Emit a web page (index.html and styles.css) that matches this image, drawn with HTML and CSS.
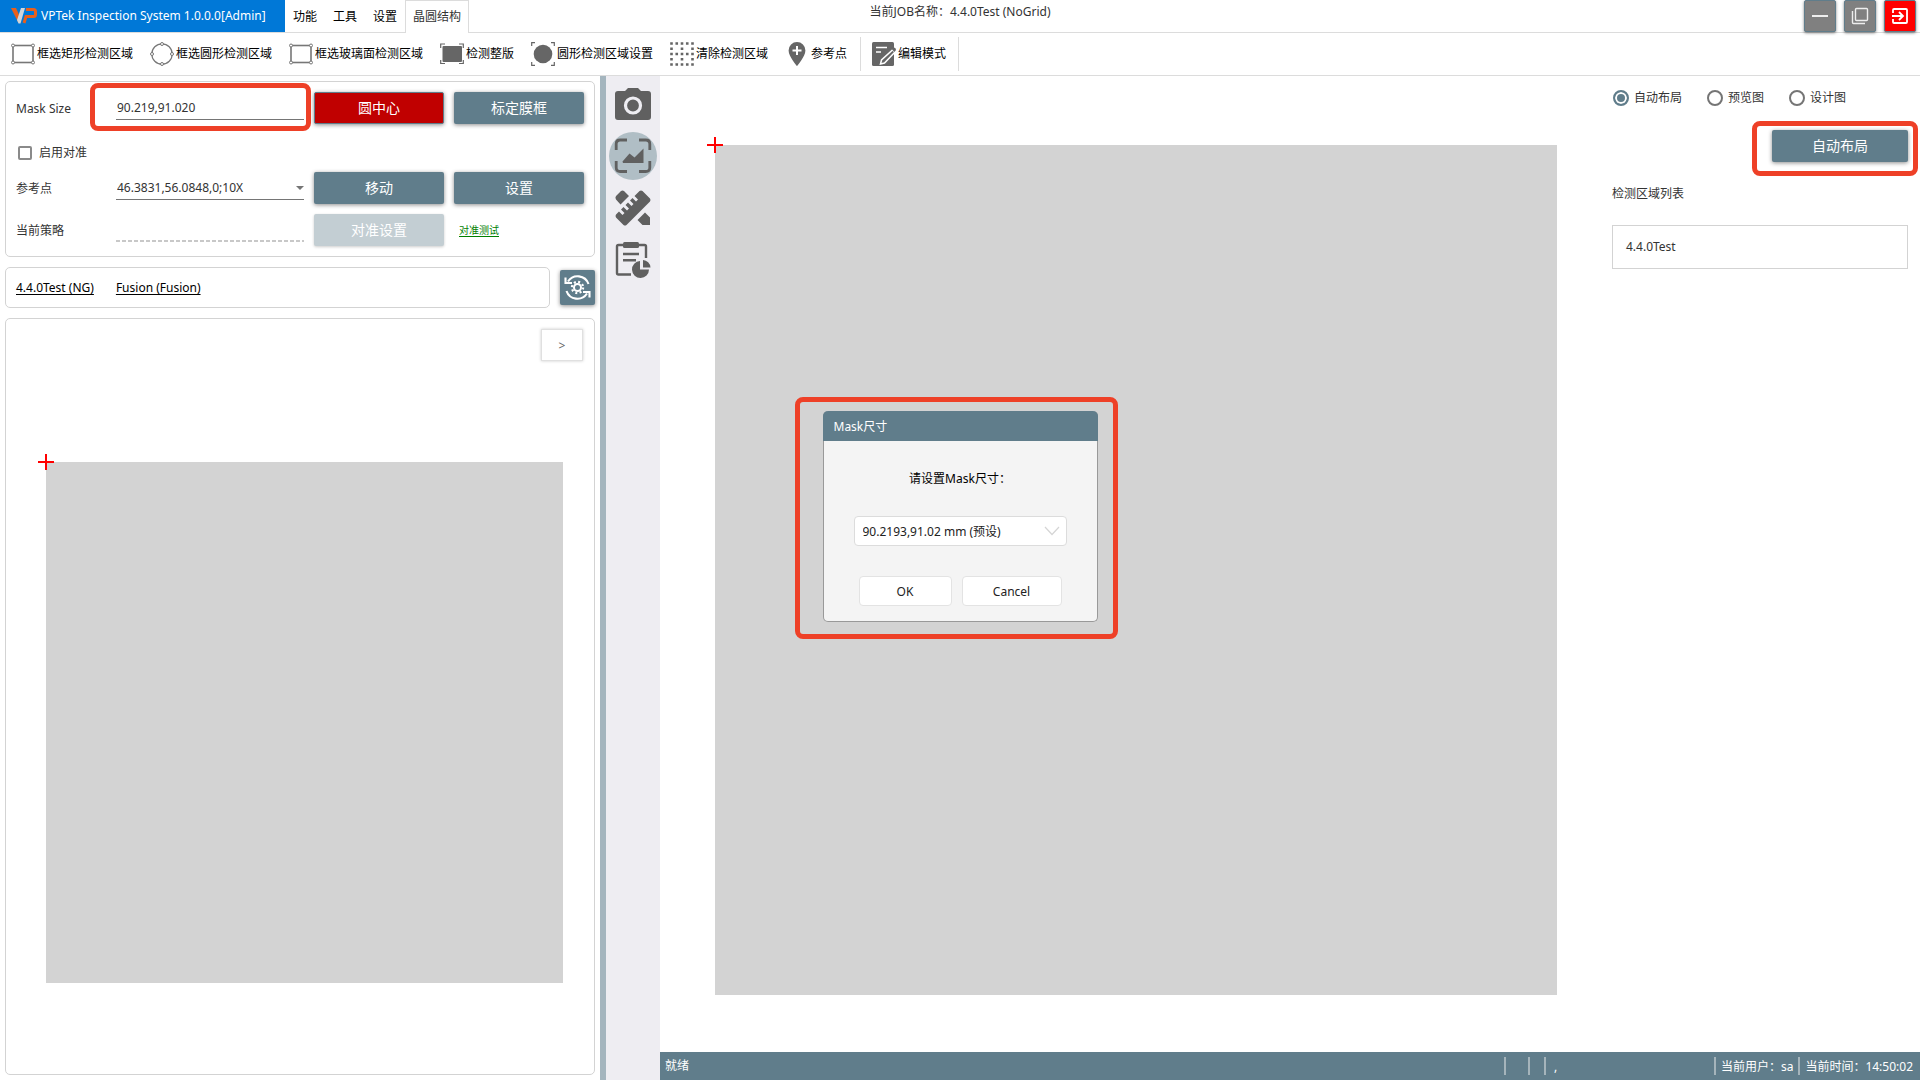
FILE: index.html
```html
<!DOCTYPE html>
<html lang="zh-CN">
<head>
<meta charset="utf-8">
<title>VPTek Inspection System</title>
<link rel="stylesheet" href="styles.css">
</head>
<body>
<header class="titlebar">
  <div class="brand">
    <svg class="brand-logo" viewBox="0 0 26 16" width="26" height="16"><path d="M0 0h5l4.500 10-2 5z" fill="#e8601c"/><path d="M14 0h-4L6 12l1.500 3.500h2z" fill="#cfd6dc"/><path d="M15 1.500h7.500a2 2 0 0 1 2 2v3a2 2 0 0 1-2 2H15l-2 6.500" fill="none" stroke="#e8601c" stroke-width="3"/></svg>
    <span>VPTek Inspection System 1.0.0.0[Admin]</span>
  </div>
  <nav class="menu">
    <button class="menu-item">功能</button>
    <button class="menu-item">工具</button>
    <button class="menu-item">设置</button>
    <button class="menu-item menu-item-active">晶圆结构</button>
  </nav>
  <div class="job-name">当前JOB名称：4.4.0Test (NoGrid)</div>
  <div class="window-buttons">
    <button class="win-btn" aria-label="最小化"><svg viewBox="0 0 30 30" width="30" height="30"><path d="M7 15h16" stroke="#eee" stroke-width="2"/></svg></button>
    <button class="win-btn" aria-label="还原"><svg viewBox="0 0 30 30" width="30" height="30" fill="none" stroke="#eee" stroke-width="1.400"><rect x="10.500" y="7.500" width="12" height="12" rx="1"/><path d="M7.500 10v11.500a1 1 0 0 0 1 1H20"/></svg></button>
    <button class="win-btn win-btn-exit" aria-label="退出"><svg viewBox="0 0 30 30" width="30" height="30" fill="none" stroke="#fff" stroke-width="1.800"><path d="M8 12V9q0-1 1-1h12q1 0 1 1v12q0 1-1 1H9q-1 0-1-1v-3M7 15h10M14 11l4 4-4 4"/></svg></button>
  </div>
</header>

<div class="toolbar">
  <button class="tool"><svg viewBox="0 0 24 24" width="24" height="24" fill="#fff" stroke="#777"><rect x="2" y="3.500" width="20" height="17" stroke-width="1.600"/><circle cx="2" cy="3.500" r="1.500"/><circle cx="22" cy="3.500" r="1.500"/><circle cx="2" cy="20.500" r="1.500"/><circle cx="22" cy="20.500" r="1.500"/></svg>框选矩形检测区域</button>
  <button class="tool"><svg viewBox="0 0 24 24" width="24" height="24" fill="#fff" stroke="#777"><circle cx="12" cy="12" r="10.200" stroke-width="1.200"/><circle cx="12" cy="2" r="1.500"/><circle cx="12" cy="22" r="1.500"/><circle cx="2" cy="12" r="1.500"/><circle cx="22" cy="12" r="1.500"/></svg>框选圆形检测区域</button>
  <button class="tool"><svg viewBox="0 0 24 24" width="24" height="24" fill="#fff" stroke="#777"><rect x="2" y="3.500" width="20" height="17" stroke-width="1.600"/><circle cx="2" cy="3.500" r="1.500"/><circle cx="22" cy="3.500" r="1.500"/><circle cx="2" cy="20.500" r="1.500"/><circle cx="22" cy="20.500" r="1.500"/></svg>框选玻璃面检测区域</button>
  <button class="tool"><svg viewBox="0 0 24 24" width="24" height="24"><rect x="2.500" y="4" width="19.500" height="16" rx="1" fill="#666"/><path d="M.7 6V2H5M19 2h4.300v4M.7 18v3.500H5M19 21.500h4.300V18" fill="none" stroke="#666" stroke-width="1.200"/></svg>检测整版</button>
  <button class="tool"><svg viewBox="0 0 24 24" width="24" height="24"><circle cx="12" cy="12" r="9.300" fill="#666"/><path d="M.7 4V.7H4M20 .7h3.300V4M.7 20v3.300H4M20 23.300h3.300V20" fill="none" stroke="#666" stroke-width="1.200"/></svg>圆形检测区域设置</button>
  <button class="tool"><svg viewBox="0 0 24 24" width="24" height="24" fill="none" stroke="#666" stroke-width="2.600" stroke-dasharray="2.600 2.650"><path d="M.2 1.500H24"/><path d="M.2 12H24"/><path d="M.2 22.500H24"/><path d="M1.500 5.450v2.600M12 5.450v2.600M22.500 5.450v2.600M1.500 15.950v2.600M12 15.950v2.600M22.500 15.950v2.600" stroke-dasharray="none"/></svg>清除检测区域</button>
  <button class="tool"><svg viewBox="0 0 24 24" width="24" height="24"><path d="M12 0a8.400 8.400 0 0 0-8.400 8.400C3.600 14.500 12 24 12 24s8.400-9.500 8.400-15.600A8.400 8.400 0 0 0 12 0z" fill="#666"/><path d="M12 4v9M7.500 8.500h9" stroke="#fff" stroke-width="2"/></svg>参考点</button>
  <div class="tool-group"><button class="tool"><svg viewBox="0 0 24 24" width="24" height="24"><path d="M1.500 0h19Q22 0 22 1.500v21q0 1.500-1.500 1.500h-19Q0 24 0 22.500v-21Q0 0 1.500 0z" fill="#666"/><path d="M4 5.500h11M4 10h5" stroke="#fff" stroke-width="1.700"/><path d="M20.500 8L23 10 12.500 21l-4 1 1-4z" fill="#666" stroke="#fff" stroke-width="1.500"/><path d="M20 7.500l2-2q2 0 2 2.500l-1.500 2z" fill="#666"/></svg>编辑模式</button></div>
</div>

<main class="workspace">
  <section class="side">
    <div class="card settings">
      <label class="field-label" for="mask">Mask Size</label>
      <div class="marked-field"><input class="line-input" id="mask" type="text" value="90.219,91.020"></div>
      <button class="btn btn-danger">圆中心</button>
      <button class="btn">标定膜框</button>

      <label class="check"><input class="check-box" type="checkbox">启用对准</label>

      <label class="field-label" for="ref">参考点</label>
      <div class="line-select"><select class="line-input" id="ref"><option>46.3831,56.0848,0;10X</option></select></div>
      <button class="btn">移动</button>
      <button class="btn">设置</button>

      <label class="field-label" for="policy">当前策略</label>
      <input class="line-input line-input-off" id="policy" type="text" disabled>
      <button class="btn" disabled>对准设置</button>
      <a class="test-link" href="#">对准测试</a>
    </div>
    <div class="job-row">
      <div class="card job-links"><a href="#">4.4.0Test (NG)</a><a href="#">Fusion (Fusion)</a></div>
      <button class="sync-btn" aria-label="同步设置"><svg viewBox="0 0 27 27" width="27" height="27" fill="none" stroke="#fff"><path d="M4 7.500A11.500 11.500 0 0 1 24.500 10M23 19.500A11.500 11.500 0 0 1 2.500 17" stroke-width="2.100"/><path d="M1.500 3.500V9H8M25.500 23.500V18H19" stroke-width="2.100"/><circle cx="13.500" cy="13.500" r="3.500" stroke-width="2"/><circle cx="13.500" cy="13.500" r="5.600" stroke-width="2.200" stroke-dasharray="2 2.400"/></svg></button>
    </div>
    <div class="card preview">
      <button class="expand-btn">&gt;</button>
      <div class="plate plate-small"><svg class="cross" viewBox="0 0 16 16" width="16" height="16"><path d="M8 0v16M0 8h16" stroke="#f00" stroke-width="2"/></svg></div>
    </div>
  </section>
  <div class="splitter"></div>
  <nav class="rail">
    <button class="rail-btn" aria-label="相机"><svg viewBox="0 0 48 48" width="48" height="48"><path d="M9 11h7l3-3h10l3 3h7q3 0 3 3v23q0 3-3 3H9q-3 0-3-3V14q0-3 3-3z" fill="#606060"/><circle cx="24" cy="25.500" r="7.500" fill="none" stroke="#eeedf2" stroke-width="3.200"/></svg></button>
    <button class="rail-btn rail-btn-active" aria-label="图像"><svg viewBox="0 0 48 48" width="48" height="48"><path d="M7.200 18v-6q0-4 4-4H18M30 8h6.800q4 0 4 4v6M40.800 29v6.500q0 4-4 4H30M18 39.500h-6.800q-4 0-4-4V29" fill="none" stroke="#606060" stroke-width="2.800"/><path d="M13.500 29.500l7-8 5 4 9-9v14.500H14z" fill="#606060"/></svg></button>
    <button class="rail-btn" aria-label="测量"><svg viewBox="0 0 48 48" width="48" height="48" fill="#606060"><path d="M7 12l5-5q1.500-1 3 0l5 5-8.500 8.500-4.500-5q-1.200-1.700 0-3.500zM30.500 7q1.500-1 3 0l7.500 7.500q1 1.500 0 3L17.500 41q-1.500 1-3 0L7 33.500q-1-1.500 0-3l3-3 3.500 3.500 2-2-3.500-3.500 2.500-2.500 3.500 3.500 2-2-3.500-3.500 2.500-2.500 3.500 3.500 2-2-3.500-3.500 2.500-2.500 3.500 3.500 2-2-3.500-3.500zM36 28.500l5 5V41h-7.500l-5-5z"/></svg></button>
    <button class="rail-btn" aria-label="报告"><svg viewBox="0 0 48 48" width="48" height="48"><path d="M14 9H9.500Q8 9 8 10.500V37q0 1.500 1.500 1.500H22M30 9h5.500Q37 9 37 10.500V22M14 18h16M14 24.300h13" fill="none" stroke="#606060" stroke-width="2.400"/><rect x="14" y="6" width="16" height="6" rx="1.500" fill="#606060"/><path d="M31 25v8.500h9A8.500 8.500 0 1 1 31 25zM34 24a8 8 0 0 1 7.500 7.500H34z" fill="#606060"/></svg></button>
  </nav>
  <div class="content">
    <div class="stage">
      <div class="plate plate-large"><svg class="cross" viewBox="0 0 16 16" width="16" height="16"><path d="M8 0v16M0 8h16" stroke="#f00" stroke-width="2"/></svg></div>
    </div>
    <aside class="layout-panel">
      <div class="radios">
        <label class="radio"><input class="radio-dot" type="radio" name="view" checked>自动布局</label>
        <label class="radio"><input class="radio-dot" type="radio" name="view">预览图</label>
        <label class="radio"><input class="radio-dot" type="radio" name="view">设计图</label>
      </div>
      <div class="marked-action"><button class="btn">自动布局</button></div>
      <h2 class="list-title">检测区域列表</h2>
      <ul class="area-list"><li>4.4.0Test</li></ul>
    </aside>
    <footer class="status">
      <span class="status-ready">就绪</span>
      <span class="status-cell status-empty-wide"></span>
      <span class="status-cell status-empty"></span>
      <span class="status-cell status-position">,</span>
      <span class="status-cell">当前用户：sa</span>
      <span class="status-cell">当前时间：14:50:02</span>
    </footer>
  </div>
</main>

<div class="overlay">
  <form class="dialog">
    <h1 class="dialog-title">Mask尺寸</h1>
    <div class="dialog-body">
      <label class="dialog-label" for="size">请设置Mask尺寸：</label>
      <div class="size-box">
        <select class="size-select" id="size"><option>90.2193,91.02 mm (预设)</option></select>
        <svg class="size-arrow" viewBox="0 0 16 10" width="16" height="10"><path d="M1 1l7 7.500L15 1" fill="none" stroke="#d5d5d5" stroke-width="1.200"/></svg>
      </div>
      <div class="dialog-actions">
        <button class="plain-btn" type="button">OK</button>
        <button class="plain-btn plain-btn-wide" type="button">Cancel</button>
      </div>
    </div>
  </form>
</div>
</body>
</html>
```
FILE: styles.css
```css
* { box-sizing: border-box; }

body {
  margin: 0;
  min-height: 100vh;
  display: flex;
  flex-direction: column;
  position: relative;
  background: #fff;
  color: #333;
  font: 12px/16px "Noto Sans", "Noto Sans CJK SC", sans-serif;
}

button, input, select { font: inherit; color: inherit; margin: 0; }
button { border: 0; padding: 0; background: none; white-space: nowrap; }
svg { display: block; flex: none; }
a { color: #000; text-underline-offset: 2px; }

/* title bar */
.titlebar {
  display: flex;
  position: relative;
  box-shadow: inset 0 -1px #dcdcdc;
}
.brand {
  display: flex;
  align-items: center;
  gap: 4px;
  width: 285px;
  height: 32px;
  padding-left: 11px;
  background: #0078d7;
  color: #fff;
  white-space: nowrap;
}
.menu { display: flex; color: #000; }
.menu-item { width: 40px; height: 33px; }
.menu-item-active {
  width: 64px;
  border: 1px solid #dcdcdc;
  border-bottom: 0;
  background: #fff;
  color: #333;
}
.job-name {
  position: absolute;
  left: 0;
  right: 0;
  top: 4px;
  text-align: center;
  pointer-events: none;
}
.window-buttons { display: flex; gap: 8px; margin-left: auto; padding-right: 4px; }
.win-btn {
  width: 32px;
  height: 32px;
  border: 1px solid #607d8b;
  border-radius: 2px;
  background: #808080;
  box-shadow: 0 1px 3px rgba(0, 0, 0, .5);
}
.win-btn-exit { background: #f00; }

/* toolbar */
.toolbar {
  display: flex;
  align-items: center;
  gap: 17px;
  height: 43px;
  padding-left: 11px;
  border-bottom: 1px solid #dcdcdc;
  color: #000;
}
.tool { display: flex; align-items: center; gap: 2px; }
.tool-group {
  display: flex;
  height: 34px;
  margin-left: -4px;
  padding: 0 12px 0 11px;
  border: solid #dcdcdc;
  border-width: 0 1px;
}

/* workspace */
.workspace { flex: 1; display: flex; }
.side {
  width: 600px;
  display: flex;
  flex-direction: column;
  gap: 10px;
  padding: 5px;
}
.card { border: 1px solid #d3d3d3; border-radius: 5px; }
.settings {
  display: grid;
  grid-template-columns: 90px 188px 130px 130px;
  grid-template-rows: 32px 28px 32px 32px;
  gap: 10px;
  align-items: center;
  padding: 10px;
}
.field-label { padding-top: 2px; }
.check {
  grid-column: 1 / -1;
  align-self: end;
  display: flex;
  align-items: center;
  gap: 7px;
  height: 18px;
  padding-left: 2px;
}
.check-box {
  appearance: none;
  width: 14px;
  height: 14px;
  border: 2px solid #8a8a8a;
  border-radius: 2px;
}
.line-input {
  display: block;
  width: 100%;
  height: 24px;
  padding: 0 1px;
  border: 0;
  border-bottom: 1px solid #757575;
  border-radius: 0;
  background: none;
  appearance: none;
  outline: 0;
}
.line-input-off {
  border-bottom: 0;
  background: repeating-linear-gradient(90deg, #c8c8c8 0 4px, transparent 4px 6px) bottom / 100% 2px no-repeat;
}
.line-select { position: relative; }
.line-select::after {
  content: "";
  position: absolute;
  right: 0;
  top: 10px;
  border: 4px solid transparent;
  border-top-color: #757575;
  border-bottom: 0;
}
.marked-field, .marked-action { position: relative; }
.marked-field::after, .marked-action::after, .dialog::after {
  content: "";
  position: absolute;
  border: 5px solid #ee4027;
  border-radius: 8px;
  pointer-events: none;
}
.marked-field::after { inset: -13px -7px -11px -26px; }

.btn {
  width: 100%;
  height: 32px;
  border-radius: 2px;
  background: #607d8b;
  box-shadow: 0 1px 4px rgba(0, 0, 0, .45);
  color: #fff;
  font-size: 14px;
}
.btn:disabled { background: #c3ced3; box-shadow: 0 1px 3px rgba(0, 0, 0, .2); }
.btn-danger { border: 1px solid #607d8b; background: #c00000; }
.test-link { padding-left: 5px; color: #008000; font-size: 10px; }

.job-row { display: flex; align-items: center; gap: 10px; }
.job-links { flex: 1; display: flex; align-items: center; gap: 22px; height: 41px; padding-left: 10px; }
.sync-btn {
  display: grid;
  place-items: center;
  width: 35px;
  height: 35px;
  border-radius: 2px;
  background: #607d8b;
  box-shadow: 0 1px 4px rgba(0, 0, 0, .45);
}
.preview { flex: 1; display: flex; flex-direction: column; padding: 10px 11px; }
.expand-btn {
  align-self: flex-end;
  width: 42px;
  height: 32px;
  padding-top: 2px;
  border: 1px solid #e0e0e0;
  box-shadow: 0 0 3px rgba(0, 0, 0, .2);
  color: #666;
}
.plate { position: relative; background: #d3d3d3; }
.plate-small { margin: 101px 20px 0 29px; aspect-ratio: 517 / 521; }
.plate-large { aspect-ratio: 842 / 850; }
.cross { position: absolute; left: -8px; top: -8px; }

.splitter { width: 6px; background: #a4b5be; }
.rail {
  width: 54px;
  display: flex;
  flex-direction: column;
  align-items: center;
  gap: 4px;
  padding-top: 4px;
  background: #eeedf2;
}
.rail-btn { width: 48px; height: 48px; border-radius: 50%; }
.rail-btn-active { background: #b0bec5; }

.content {
  flex: 1;
  display: grid;
  grid-template-columns: 1fr 316px;
  grid-template-rows: 1fr auto;
}
.stage { padding: 69px 47px 0 55px; }
.layout-panel { padding: 12px 12px 0 8px; }
.radios { display: flex; gap: 25px; padding-left: 1px; }
.radio { display: flex; align-items: center; gap: 5px; height: 20px; }
.radio-dot {
  appearance: none;
  width: 16px;
  height: 16px;
  border: 2px solid #757575;
  border-radius: 50%;
}
.radio-dot:checked {
  border-color: #607d8b;
  background: #607d8b;
  box-shadow: inset 0 0 0 2px #fff;
}
.marked-action { width: 136px; margin: 22px 0 0 auto; }
.marked-action::after { inset: -9px -10px -14px -20px; }
.list-title { margin: 24px 0 23px; font-size: 12px; font-weight: 400; }
.area-list {
  margin: 0;
  padding: 13px;
  border: 1px solid #d3d3d3;
  list-style: none;
}

.status {
  grid-column: 1 / -1;
  display: flex;
  align-items: center;
  gap: 5px;
  height: 28px;
  padding: 0 7px 0 5px;
  background: #607d8b;
  color: #fff;
  line-height: 20px;
}
.status-ready { flex: 1; }
.status-cell { height: 18px; padding-left: 5px; border-left: 2px solid #a5b4bb; }
.status-empty-wide { width: 19px; }
.status-empty { width: 11px; }
.status-position { width: 165px; padding-left: 8px; }

/* dialog */
.overlay {
  position: absolute;
  inset: 0;
  display: grid;
  place-items: center;
  padding-bottom: 48px;
}
.dialog {
  position: relative;
  width: 275px;
  border: 1px solid #999;
  border-top: 0;
  border-radius: 5px;
  background: #f4f4f4;
  color: #222;
}
.dialog::after { inset: -14px -21px -18px -29px; }
.dialog-title {
  margin: 0 -1px;
  padding: 8px 11px 6px;
  border-radius: 5px 5px 0 0;
  background: #607d8b;
  color: #fff;
  font-size: 12px;
  font-weight: 400;
}
.dialog-body {
  display: flex;
  flex-direction: column;
  align-items: center;
  padding: 30px 30px 15px;
}
.dialog-label { color: #000; }
.size-box { position: relative; width: 213px; margin: 29px 0 30px; }
.size-select {
  display: block;
  width: 100%;
  height: 30px;
  padding: 2px 8px 0;
  border: 1px solid #dcdcdc;
  border-radius: 4px;
  background: #fff;
  appearance: none;
}
.size-arrow { position: absolute; right: 7px; top: 10px; pointer-events: none; }
.dialog-actions { display: flex; gap: 10px; }
.plain-btn {
  width: 93px;
  height: 30px;
  padding-top: 2px;
  border: 1px solid #e3e3e3;
  border-radius: 4px;
  background: #fff;
}
.plain-btn-wide { width: 100px; }
```
